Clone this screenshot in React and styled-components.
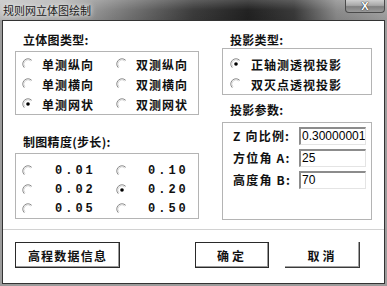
import React from "react";
import styled, { createGlobalStyle } from "styled-components";

const GlobalStyle = createGlobalStyle`
  html, body { margin: 0; padding: 0; background: #fff; }
  body { font-family: "Noto Sans CJK SC", "Liberation Sans", sans-serif; }
`;

const CJK = `"Noto Sans CJK SC", "Liberation Sans", sans-serif`;

const Window = styled.div`
  width: 387px;
  height: 286px;
  display: flex;
  flex-direction: column;
  background: #9c9c9c;
  box-sizing: border-box;
`;

const TitleBar = styled.div`
  height: 20px;
  flex: none;
  display: flex;
  justify-content: space-between;
  align-items: flex-start;
  background:
    linear-gradient(180deg, rgba(255,255,255,0.18) 0%, rgba(0,0,0,0) 50%, rgba(0,0,0,0.08) 100%),
    linear-gradient(90deg, #c4c4c4 0%, #b2b2b2 16%, #7a7a7a 32%, #3c3c3c 50%, #222 64%, #3a3a3a 76%, #8c8c8c 87%, #a4a4a4 100%);
`;

const Title = styled.span`
  font-family: ${CJK};
  font-size: 11px;
  line-height: 20px;
  color: #1b1b1b;
  padding-left: 3px;
  text-shadow: 0 0 4px #eee, 0 0 6px #e8e8e8;
`;

const CloseButton = styled.div`
  width: 40px;
  height: 13px;
  margin-right: 2px;
  box-sizing: border-box;
  border: 1px solid #4a4a4a;
  border-top: none;
  border-radius: 0 0 4px 4px;
  background: linear-gradient(180deg, #cfcfcf 0%, #a8a8a8 45%, #808080 55%, #9a9a9a 100%);
  color: #fff;
  font-family: "Liberation Sans", sans-serif;
  font-weight: 700;
  font-size: 11px;
  line-height: 12px;
  text-align: center;
  text-shadow: 0 0 1px #222, 0 0 1px #222;
`;

const Client = styled.div`
  flex: 1;
  margin: 0 2px 2px 2px;
  border: 1px solid #333;
  background: #fff;
  display: flex;
  flex-direction: column;
`;

const Body = styled.div`
  height: 208px;
  box-sizing: border-box;
  padding: 11px 11px 0 12px;
  display: flex;
  gap: 23px;
`;

const Column = styled.div`
  width: ${(p) => p.$width}px;
  display: flex;
  flex-direction: column;
`;

const GroupLabel = styled.div`
  font-family: ${CJK};
  font-weight: 700;
  font-size: 12px;
  line-height: 16px;
  height: 16px;
  color: #111;
  padding-left: 8px;
  margin-top: ${(p) => p.$top || 0}px;
  letter-spacing: 0.3px;
`;

const Box = styled.div`
  margin-top: ${(p) => p.$top}px;
  border: 1px solid #b4b4b4;
  padding: ${(p) => p.$pad};
  height: ${(p) => (p.$height ? p.$height + "px" : "auto")};
  box-sizing: ${(p) => (p.$height ? "border-box" : "content-box")};
`;

const RadioGrid = styled.div`
  display: grid;
  grid-template-columns: repeat(${(p) => p.$cols}, ${(p) => p.$colWidth}px);
  grid-auto-rows: ${(p) => p.$rowHeight}px;
`;

const RadioRow = styled.label`
  display: flex;
  align-items: center;
  gap: ${(p) => p.$gap}px;
  font-family: ${(p) => (p.$mono ? `"Liberation Mono", monospace` : CJK)};
  font-weight: 700;
  font-size: 12px;
  letter-spacing: ${(p) => (p.$mono ? 3 : 1)}px;
  color: #111;
  white-space: nowrap;
`;

const RadioIcon = styled.svg`
  width: 12px;
  height: 12px;
  flex: none;
`;

const Radio = ({ checked }) => (
  <RadioIcon viewBox="0 0 12 12">
    <path d="M2.3 9.7 A5.2 5.2 0 0 1 9.7 2.3" fill="none" stroke="#8a8a8a" strokeWidth="1" />
    <path d="M3.1 8.9 A4.1 4.1 0 0 1 8.9 3.1" fill="none" stroke="#cfcfcf" strokeWidth="0.8" />
    {checked && <circle cx="6" cy="6" r="1.8" fill="#000" />}
  </RadioIcon>
);

const ParamGrid = styled.div`
  display: grid;
  grid-template-columns: 66px 67px;
  grid-auto-rows: 18px;
  row-gap: 4px;
`;

const ParamLabel = styled.div`
  font-family: ${CJK};
  font-weight: 700;
  font-size: 12px;
  line-height: 18px;
  color: #111;
  letter-spacing: 1.2px;
  white-space: nowrap;
`;

const Field = styled.div`
  box-sizing: border-box;
  border-top: 2px solid #8c8c8c;
  border-left: 2px solid #8c8c8c;
  border-right: 1px solid #e4e4e4;
  border-bottom: 1px solid #e4e4e4;
  font-family: "Liberation Sans", sans-serif;
  font-size: 12px;
  line-height: 15px;
  padding-left: 1px;
  color: #000;
  overflow: hidden;
  white-space: nowrap;
`;

const Footer = styled.div`
  flex: 1;
  border-top: 1px solid #d2d2d2;
  padding: 12px 24px 0 12px;
  display: flex;
  align-items: flex-start;
  gap: 16px;
`;

const Button = styled.div`
  width: ${(p) => p.$width}px;
  height: 26px;
  box-sizing: border-box;
  margin-left: ${(p) => (p.$push ? "auto" : "0")};
  display: flex;
  align-items: center;
  justify-content: center;
  font-family: ${CJK};
  font-weight: 700;
  font-size: 12px;
  letter-spacing: ${(p) => p.$spacing}px;
  color: #111;
  background: #fff;
  border: ${(p) => (p.$outlined ? "1px solid #2a2a2a" : "none")};
  box-shadow: ${(p) =>
    p.$outlined
      ? "inset -1px -1px 0 #9a9a9a"
      : "inset -1px -1px 0 #3a3a3a, inset -2px -2px 0 #a0a0a0"};
`;

const types = [
  ["单测纵向", false],
  ["双测纵向", false],
  ["单测横向", false],
  ["双测横向", false],
  ["单测网状", true],
  ["双测网状", false],
];

const steps = [
  ["0.01", false],
  ["0.10", false],
  ["0.02", false],
  ["0.20", true],
  ["0.05", false],
  ["0.50", false],
];

export default function App() {
  return (
    <>
      <GlobalStyle />
      <Window>
        <TitleBar>
          <Title>规则网立体图绘制</Title>
          <CloseButton>X</CloseButton>
        </TitleBar>
        <Client>
          <Body>
            <Column $width={184}>
              <GroupLabel>立体图类型:</GroupLabel>
              <Box $top={3} $pad="2px 0 0 6px">
                <RadioGrid $cols={2} $colWidth={94} $rowHeight={20}>
                  {types.map(([t, c]) => (
                    <RadioRow key={t} $gap={8}>
                      <Radio checked={c} />
                      {t}
                    </RadioRow>
                  ))}
                </RadioGrid>
              </Box>
              <GroupLabel $top={19}>制图精度(步长):</GroupLabel>
              <Box $top={3} $pad="7px 0 0 6px">
                <RadioGrid $cols={2} $colWidth={94} $rowHeight={19}>
                  {steps.map(([t, c], i) => (
                    <RadioRow key={t} $gap={i % 2 ? 20 : 21} $mono>
                      <Radio checked={c} />
                      {t}
                    </RadioRow>
                  ))}
                </RadioGrid>
              </Box>
            </Column>
            <Column $width={150}>
              <GroupLabel>投影类型:</GroupLabel>
              <Box $top={0} $pad="5px 0 0 7px">
                <RadioGrid $cols={1} $colWidth={140} $rowHeight={20}>
                  <RadioRow $gap={9}>
                    <Radio checked />
                    正轴测透视投影
                  </RadioRow>
                  <RadioRow $gap={9}>
                    <Radio />
                    双灭点透视投影
                  </RadioRow>
                </RadioGrid>
              </Box>
              <GroupLabel $top={7}>投影参数:</GroupLabel>
              <Box $top={4} $pad="4px 5px 0 10px" $height={98}>
                <ParamGrid>
                  <ParamLabel>Z 向比例:</ParamLabel>
                  <Field>0.30000001</Field>
                  <ParamLabel>方位角 A:</ParamLabel>
                  <Field>25</Field>
                  <ParamLabel>高度角 B:</ParamLabel>
                  <Field>70</Field>
                </ParamGrid>
              </Box>
            </Column>
          </Body>
          <Footer>
            <Button $width={105} $spacing={1.2} $outlined>高程数据信息</Button>
            <Button $width={74} $spacing={3} $outlined $push>确定</Button>
            <Button $width={75} $spacing={3}>取消</Button>
          </Footer>
        </Client>
      </Window>
    </>
  );
}
